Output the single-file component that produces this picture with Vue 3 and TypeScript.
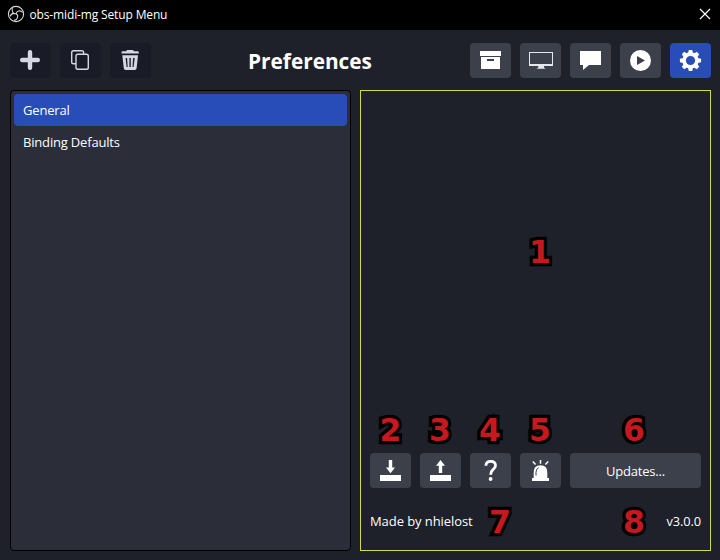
<script setup lang="ts">
import { ref } from 'vue'

interface Marker {
  label: string
  x: number
  y: number
}

const pages: string[] = ['General', 'Binding Defaults']
const current = ref<string>('General')

// Callout numbers laid over the window, placed by their centre
const markers: Marker[] = [
  { label: '1', x: 540, y: 252 },
  { label: '2', x: 390.5, y: 430 },
  { label: '3', x: 440, y: 430 },
  { label: '4', x: 490, y: 430 },
  { label: '5', x: 540, y: 430 },
  { label: '6', x: 634, y: 430 },
  { label: '7', x: 500, y: 522 },
  { label: '8', x: 634, y: 522 },
]
</script>

<template>
  <div class="window">
    <header class="titlebar">
      <svg class="logo" width="18" height="18" viewBox="0 0 18 18">
        <circle cx="9" cy="9" r="7.6" />
        <path d="M5.4 3.2C4.4 6.4 6 8.8 9.2 8.8C9.6 6 12.8 4.6 15.6 7.4M9.2 8.8C11.8 10.6 11 14.4 7.2 15.4M6.8 8.4C5 8.6 3.6 9.8 3.2 11.4" />
      </svg>
      <span class="caption">obs-midi-mg Setup Menu</span>
      <svg class="close" width="12" height="12" viewBox="0 0 12 12">
        <path d="M1 1L11 11M11 1L1 11" />
      </svg>
    </header>

    <div class="toolbar">
      <div class="group">
        <button class="btn dim">
          <svg width="41" height="35" viewBox="0 0 41 35"><path class="plus" d="M20 9.2V24.8M12.2 17H27.8" /></svg>
        </button>
        <button class="btn dim">
          <svg width="41" height="35" viewBox="0 0 41 35">
            <path class="line" d="M16 20.7H13.5Q11.7 20.7 11.7 18.9V9.5Q11.7 7.7 13.5 7.7H21.8Q23.6 7.7 23.6 9.5V11.2" />
            <rect class="line" x="16" y="11.3" width="12.3" height="15" rx="1.8" />
          </svg>
        </button>
        <button class="btn dim">
          <svg width="41" height="35" viewBox="0 0 41 35">
            <path d="M11.5 9Q11.5 8.2 12.5 8.2H16.2Q16.5 7 17.8 7H22.3Q23.6 7 23.9 8.2H27.8Q28.8 8.2 28.8 9V10.6H11.5Z" />
            <path fill-rule="evenodd" d="M12.3 12.2H28L26.6 25.2Q26.4 27 24.8 27H15.6Q14 27 13.8 25.2ZM15.6 15L16.6 24H17.7L17.1 15ZM19.4 15V24H20.8V15ZM23.1 15L22.5 24H23.6L24.7 15Z" />
          </svg>
        </button>
      </div>
      <h1 class="heading">Preferences</h1>
      <div class="group">
        <button class="btn">
          <svg width="41" height="35" viewBox="0 0 41 35">
            <path d="M10 8H31V13H10Z" />
            <path fill-rule="evenodd" d="M11 14H30V26H11ZM17 16V18H24V16Z" />
          </svg>
        </button>
        <button class="btn">
          <svg class="soft" width="41" height="35" viewBox="0 0 41 35">
            <path fill-rule="evenodd" d="M9 9H33V23H9ZM10 10V21H32V10Z" />
            <path d="M18.3 23H24V24.5L25.5 25.8H16.5L18.3 24.5Z" />
          </svg>
        </button>
        <button class="btn">
          <svg width="41" height="35" viewBox="0 0 41 35"><path d="M10 8H31V22H19L13 27V22H10Z" /></svg>
        </button>
        <button class="btn">
          <svg width="41" height="35" viewBox="0 0 41 35">
            <path fill-rule="evenodd" d="M31 17.5A10.5 10.5 0 1 0 10 17.5A10.5 10.5 0 1 0 31 17.5ZM17 13L25 17.5L17 22Z" />
          </svg>
        </button>
        <button class="btn active">
          <svg width="41" height="35" viewBox="0 0 41 35">
            <g transform="translate(20.5 17.5)">
              <circle class="ring" r="6.4" />
              <path v-for="n in 8" :key="n" d="M-2.5 -7L-1.7 -10.6H1.7L2.5 -7Z" :transform="`rotate(${n * 45})`" />
            </g>
          </svg>
        </button>
      </div>
    </div>

    <main class="content">
      <ul class="list">
        <li v-for="page in pages" :key="page" class="row" :class="{ selected: page === current }" @click="current = page">
          {{ page }}
        </li>
      </ul>

      <section class="panel">
        <div class="actions">
          <button class="btn">
            <svg width="41" height="35" viewBox="0 0 41 35"><path d="M10 22H31V28H10ZM18.8 7H22.2V14.5H25L20.5 20.2L16 14.5H18.8Z" /></svg>
          </button>
          <button class="btn">
            <svg width="41" height="35" viewBox="0 0 41 35"><path d="M10 22H31V28H10ZM18.8 20V12.7H16L20.5 7L25 12.7H22.2V20Z" /></svg>
          </button>
          <button class="btn">
            <svg width="41" height="35" viewBox="0 0 41 35">
              <path class="question" d="M15.9 12.7Q16 8.3 20.7 8.3Q25.5 8.3 25.5 12.5Q25.5 14.7 23 16.7Q20.7 18.5 20.7 21.7" />
              <circle cx="20.6" cy="26" r="1.9" />
            </svg>
          </button>
          <button class="btn">
            <svg width="41" height="35" viewBox="0 0 41 35">
              <path d="M12 25H13.7V19.2Q13.7 12.2 20.5 12.2Q27.3 12.2 27.3 19.2V25H29V28H12Z" />
              <path class="rays" d="M20.5 7V10.8M12.8 8.6L15.6 11.6M28.2 8.6L25.4 11.6" />
              <path class="glint" d="M16 22.5V19.3Q16 15.8 18.6 14.8" />
            </svg>
          </button>
          <button class="btn wide">Updates...</button>
        </div>
        <footer class="about">
          <span>Made by nhielost</span>
          <span class="version">v3.0.0</span>
        </footer>
      </section>
    </main>

    <span v-for="m in markers" :key="m.label" class="marker" :style="{ left: `${m.x}px`, top: `${m.y}px` }">{{ m.label }}</span>
  </div>
</template>

<style>
body {
  margin: 0;
  background: #1f212a;
}
</style>

<style scoped>
.window {
  position: relative;
  display: flex;
  flex-direction: column;
  box-sizing: border-box;
  width: 720px;
  height: 560px;
  overflow: hidden;
  background: #1f212a;
  color: #fefefe;
  font-family: 'Open Sans', 'Noto Sans', sans-serif;
  font-size: 13px;
}
.titlebar {
  display: flex;
  align-items: center;
  flex: none;
  box-sizing: border-box;
  height: 30px;
  padding: 0 9px 0 7px;
  background: #000;
}
.logo {
  margin-top: -2px;
  fill: none;
  stroke: #d8d8d8;
  stroke-width: 1.1;
}
.caption {
  flex: 1;
  margin-left: 4.5px;
  font-size: 12px;
  letter-spacing: -0.14px;
  line-height: 30px;
}
.close {
  margin-top: -2px;
  fill: none;
  stroke: #fff;
  stroke-width: 1.2;
}
.toolbar {
  display: flex;
  align-items: center;
  justify-content: space-between;
  flex: none;
  height: 35px;
  padding: 13px 9px 0 10px;
}
.group {
  display: flex;
  gap: 9px;
}
.heading {
  flex: 1;
  margin: 0;
  padding-right: 1px;
  font-size: 20.8px;
  font-weight: 700;
  line-height: 36px;
  text-align: center;
}
.btn {
  flex: none;
  width: 41px;
  height: 35px;
  padding: 0;
  border: 0;
  border-radius: 4px;
  background: #3c404b;
  color: #fefefe;
  font: inherit;
}
.btn svg {
  display: block;
  fill: #fefefe;
}
.btn.dim {
  background: #191b26;
}
.btn.dim svg {
  fill: #d5d7e2;
}
.btn.active {
  background: #284cb8;
}
.btn .soft {
  fill: #e6e7ea;
}
.plus {
  fill: none;
  stroke: #d5d7e2;
  stroke-width: 4.4;
  stroke-linecap: round;
}
.line {
  fill: none;
  stroke: #d5d7e2;
  stroke-width: 1.4;
}
.ring {
  fill: none;
  stroke: #fefefe;
  stroke-width: 3.6;
}
.question {
  fill: none;
  stroke: #fefefe;
  stroke-width: 2.8;
}
.rays {
  fill: none;
  stroke: #fefefe;
  stroke-width: 1.5;
}
.glint {
  fill: none;
  stroke: #3c404b;
  stroke-width: 1;
}
.content {
  display: grid;
  grid-template-columns: 341px 351px;
  gap: 9px;
  height: 461px;
  padding: 12px 9px 9px 10px;
}
.list {
  box-sizing: border-box;
  margin: 0;
  padding: 3px;
  border: 1px solid #000;
  border-radius: 4px;
  background: #2b2d38;
  list-style: none;
}
.row {
  height: 32px;
  padding-left: 9px;
  border-radius: 4px;
  letter-spacing: -0.18px;
  line-height: 33px;
}
.row.selected {
  background: #284cb8;
}
.panel {
  display: flex;
  flex-direction: column;
  justify-content: flex-end;
  box-sizing: border-box;
  padding: 0 9px 15px;
  border: 1px solid #d8d548;
}
.actions {
  display: flex;
  gap: 9px;
}
.btn.wide {
  flex: 1;
  letter-spacing: -0.2px;
}
.about {
  display: flex;
  justify-content: space-between;
  margin-top: 20px;
  letter-spacing: -0.08px;
  line-height: 27px;
}
.version {
  font-size: 12.8px;
}
.marker {
  position: absolute;
  transform: translate(-50%, -50%);
  color: #c5191f;
  font-family: 'DejaVu Sans', sans-serif;
  font-size: 31.5px;
  font-weight: 700;
  line-height: 36px;
  -webkit-text-stroke: 6.4px #000;
  paint-order: stroke fill;
  pointer-events: none;
}
</style>
